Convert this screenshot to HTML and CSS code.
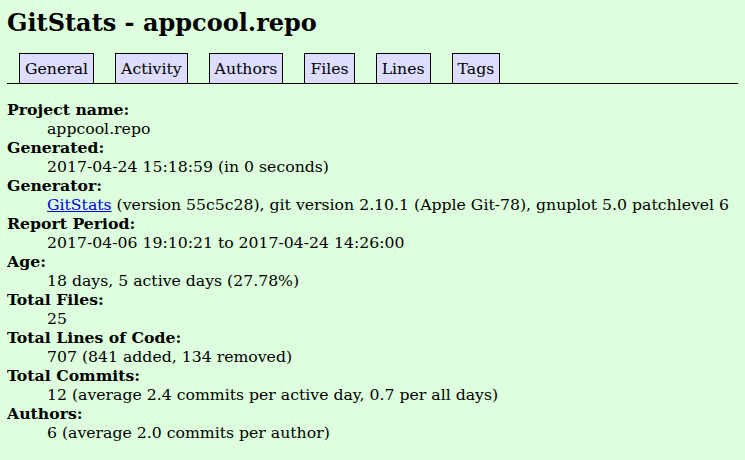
FILE: index.html
```html
<!DOCTYPE html>
<html>
<head>
<meta charset="utf-8">
<title>GitStats - appcool.repo</title>
<link rel="stylesheet" href="styles.css">
</head>
<body>
<h1 class="title">GitStats - appcool.repo</h1>
<div class="nav">
<ul class="nav-list">
<li class="nav-item"><a class="nav-link" href="#">General</a></li>
<li class="nav-item"><a class="nav-link" href="#">Activity</a></li>
<li class="nav-item"><a class="nav-link" href="#">Authors</a></li>
<li class="nav-item"><a class="nav-link" href="#">Files</a></li>
<li class="nav-item"><a class="nav-link" href="#">Lines</a></li>
<li class="nav-item"><a class="nav-link" href="#">Tags</a></li>
</ul>
</div>
<dl class="info">
<dt class="term">Project name</dt><dd class="desc">appcool.repo</dd>
<dt class="term">Generated</dt><dd class="desc">2017-04-24 15:18:59 (in 0 seconds)</dd>
<dt class="term">Generator</dt><dd class="desc"><a class="link" href="#">GitStats</a> (version 55c5c28), git version 2.10.1 (Apple Git-78), gnuplot 5.0 patchlevel 6</dd>
<dt class="term">Report Period</dt><dd class="desc">2017-04-06 19:10:21 to 2017-04-24 14:26:00</dd>
<dt class="term">Age</dt><dd class="desc">18 days, 5 active days (27.78%)</dd>
<dt class="term">Total Files</dt><dd class="desc">25</dd>
<dt class="term">Total Lines of Code</dt><dd class="desc">707 (841 added, 134 removed)</dd>
<dt class="term">Total Commits</dt><dd class="desc">12 (average 2.4 commits per active day, 0.7 per all days)</dd>
<dt class="term">Authors</dt><dd class="desc">6 (average 2.0 commits per author)</dd>
</dl>
</body>
</html>
```
FILE: styles.css
```css
body {
  margin: 8px 7px;
  background-color: #ddffdd;
  color: #000;
  font-family: "DejaVu Serif", serif;
  font-size: 15.7px;
}
.title {
  font-size: 24px;
  font-weight: bold;
  margin: 0 0 16px 0;
  line-height: 29px;
}
.nav {
  border-bottom: 1px solid #000;
  padding-left: 12px;
}
.nav-list {
  list-style: none;
  margin: 0;
  padding: 0;
  display: flex;
  gap: 21px;
}
.nav-item {
  background-color: #ddddff;
  border: 1px solid #000;
  border-bottom: none;
  padding: 4px 5px 3px 5px;
  line-height: 22px;
}
.nav-link {
  color: #000;
  text-decoration: none;
}
.info {
  margin: 16px 0 0 0;
  line-height: 19px;
}
.term {
  font-weight: bold;
}
.term::after {
  content: ":";
}
.desc {
  margin-left: 40px;
}
.link {
  color: #0000ee;
  text-decoration: underline;
}
```
